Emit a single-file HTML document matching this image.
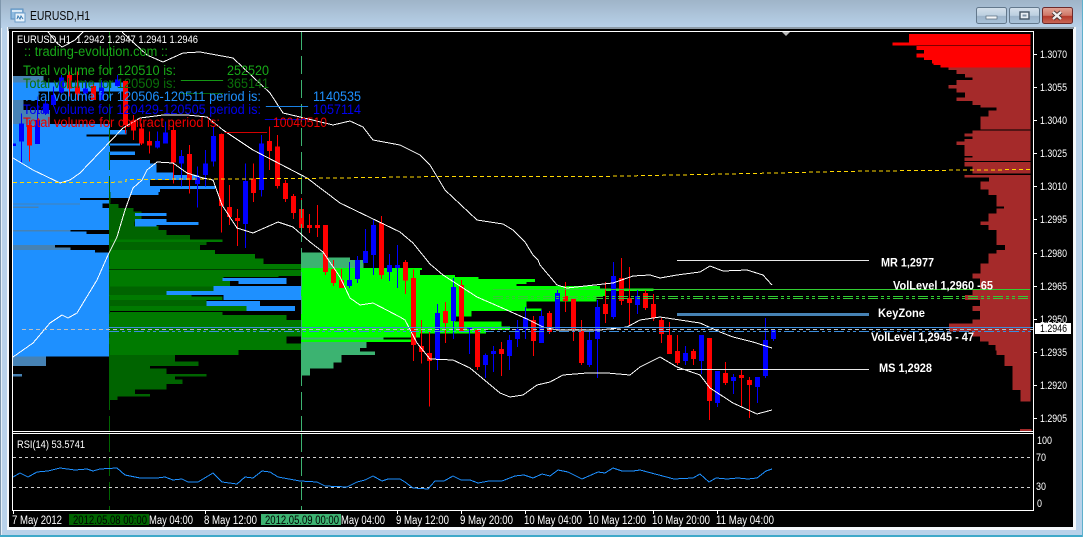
<!DOCTYPE html>
<html><head><meta charset="utf-8"><title>EURUSD,H1</title>
<style>
html,body{margin:0;padding:0;width:1083px;height:537px;overflow:hidden;background:#b9d2ea}
svg{display:block;position:absolute;left:0;top:0}
text{font-family:"Liberation Sans",sans-serif;white-space:pre}
</style></head><body>
<svg width="1083" height="537" viewBox="0 0 1083 537" xmlns="http://www.w3.org/2000/svg">
<defs>
<linearGradient id="tb" x1="0" y1="0" x2="0" y2="1"><stop offset="0" stop-color="#9fb4c8"/><stop offset="1" stop-color="#b9d2ea"/></linearGradient>
<linearGradient id="bt" x1="0" y1="0" x2="0" y2="1"><stop offset="0" stop-color="#d5e1ec"/><stop offset=".5" stop-color="#bccfe0"/><stop offset=".55" stop-color="#9db4ca"/><stop offset="1" stop-color="#a9c3da"/></linearGradient>
<linearGradient id="cl" x1="0" y1="0" x2="0" y2="1"><stop offset="0" stop-color="#e2a597"/><stop offset=".5" stop-color="#cf7667"/><stop offset=".55" stop-color="#b5392b"/><stop offset="1" stop-color="#c96a58"/></linearGradient>
</defs>
<!-- window chrome -->
<rect width="1083" height="537" fill="#b9d2ea"/>
<rect width="1083" height="28" fill="url(#tb)"/>
<rect x="0" y="0" width="1" height="537" fill="#7f97ad"/>
<rect x="1" y="28" width="1" height="507" fill="#e6f0f8"/>
<rect x="0" y="535" width="1083" height="2" fill="#3fa9c9"/>
<rect x="1082" y="0" width="1" height="537" fill="#5fb0cc"/>
<rect x="7" y="27" width="1069" height="503" fill="#f4f7fa"/>
<rect x="8" y="27" width="1066" height="2" fill="#8d9aa6"/>
<rect x="8" y="27" width="1" height="4" fill="#8d9aa6"/>
<rect x="9" y="29" width="1064" height="498" fill="#000"/>
<!-- title icon -->
<g shape-rendering="crispEdges">
<rect x="11" y="9" width="12" height="10" fill="#8fbbe0" stroke="#5a8fbf"/>
<rect x="15" y="13" width="10" height="9" fill="#e9f3fb" stroke="#6b9cc9"/>
<rect x="12" y="10" width="10" height="2" fill="#d9e8f5"/>
</g>
<path d="M17 19l1-3 2 3 1-3 2 3" fill="none" stroke="#3a7ab0"/>
<text x="30" y="20" font-size="12.5" fill="#0a0a0a" textLength="60" lengthAdjust="spacingAndGlyphs">EURUSD,H1</text>
<!-- buttons -->
<rect x="976.5" y="7.5" width="30" height="16" rx="2" fill="url(#bt)" stroke="#63788c"/>
<rect x="986" y="16" width="11" height="3" fill="#f3f6f9" stroke="#56687a" stroke-width=".7"/>
<rect x="1009.5" y="7.5" width="30" height="16" rx="2" fill="url(#bt)" stroke="#63788c"/>
<rect x="1020" y="12" width="9" height="7" fill="#e8eef4" stroke="#445566" stroke-width="1.4"/>
<rect x="1022.5" y="14.5" width="4" height="2" fill="#7f93a6"/>
<rect x="1042.5" y="7.5" width="30" height="16" rx="2" fill="url(#cl)" stroke="#6d2a2a"/>
<path d="M1053 12l8 7M1061 12l-8 7" stroke="#3c2a2a" stroke-width="4"/>
<path d="M1053 12l8 7M1061 12l-8 7" stroke="#f0ecec" stroke-width="2.4"/>

<g shape-rendering="crispEdges">
<!-- blue profile (z1) -->
<g transform="scale(.33333)">
<path fill="#4682b4" d="M38 228H130V248H38z M38 300H70V330H38z M38 330H150V372H38z"/>
<path fill="#1e90ff" d="M38 248H370V275H38z M38 275H115V300H38z
M38 372H330V390H38z M38 390H380V403H38z M38 403H260V410H38z M38 410H330V430H38z M38 430H420V437H38z M38 437H330V455H38z M38 455H405V465H38z M38 465H330V480H38z M38 480H450V490H38z M38 490H470V518H38z M38 518H520V525H38z M38 525H595V540H38z M38 540H450V558H38z M38 558H645V567H38z M38 567H480V576H38z M38 576H475V585H38z M38 585H390V594H38z M38 594H240V600H38z M38 600H327V610H38z M38 610H307V624H38z M38 624H327V690H38z M38 695H260V702H38z M38 702H327V735H38z M38 750H285V758H38z M38 758H327V1070H38z"/>
</g>
<g transform="translate(0,180) scale(.33333)">
<path fill="#4682b4" d="M38 150H212V155H38z M38 195H165V202H38z M38 202H212V210H38z M38 530H138V558H38z M38 582H66V590H38z M38 70H240V73H38z M38 80H115V84H38z"/>
<!-- green -->
<path fill="#006400" d="M327 36H332V70H327z M327 72H355V84H327z M327 84H400V95H327z M327 95H425V125H327z M327 125H403V138H327z M327 138H475V150H327z M327 150H500V165H327z M327 165H570V178H327z M327 186H620V195H327z M327 195H600V210H327z M327 320H645V333H327z M327 333H525V345H327z M327 360H620V378H327z M327 525H525V545H327z M327 545H595V558H327z M327 558H450V565H327z M327 565H500V582H327z M327 582H620V590H327z M327 590H525V598H327z M327 598H548V612H327z M327 612H500V628H327z M327 628H405V642H327z M327 642H450V650H327z M327 650H352V660H327z"/>
<path fill="#007a00" d="M327 178H667V186H327z M327 210H645V222H327z M327 222H765V235H327z M327 235H790V252H327z M327 252H903V268H327z M327 270H903V288H327z M327 288H835V291H327z M327 291H670V303H327z M327 303H690V320H327z M327 345H575V350H327z M327 350H667V360H327z M327 378H765V393H327z M327 396H667V405H327z M327 405H860V420H327z M327 420H903V470H327z M327 470H860V490H327z M327 490H903V510H327z M327 510H715V525H327z"/>
<!-- blue bars over green -->
<path fill="#1e90ff" d="M405 99H500V108H405z M405 117H500V126H405z M405 126H595V135H405z M405 135H470V140H405z M667 294H860V303H667z M715 303H860V312H715z M640 318H903V333H640z M500 333H903V345H500z M670 345H903V360H670z M620 363H780V378H620z M740 378H885V393H740z"/>
</g>
<!-- lime & sea green (z3) -->
<g transform="translate(400,220) scale(.33333)">
<path fill="#3cb371" d="M-297 98H-220V112H-297z M-297 112H-150V120H-297z M-297 120H-110V144H-297z M-297 352H-50V358H-297z M-297 366H-100V384H-297z M-297 384H-120V395H-297z M-297 395H-75V405H-297z M-297 405H-175V428H-297z M-297 428H-200V445H-297z M-297 445H-270V466H-297z"/>
<path fill="#00ff00" d="M-297 144H66V150H-297z M-297 150H60V165H-297z M-297 165H165V171H-297z M-297 171H235V177H-297z M-297 177H405V186H-297z M-297 186H380V192H-297z M-297 192H350V198H-297z M-297 198H600V205H-297z M-297 205H760V213H-297z M-297 213H615V228H-297z M-297 228H590V245H-297z M-297 245H380V265H-297z M-297 265H425V273H-297z M-297 273H215V290H-297z M-297 290H165V305H-297z M-297 305H305V320H-297z M-297 320H330V330H-297z M-297 330H258V340H-297z M-297 340H60V352H-297z M-297 358H35V366H-297z"/>
</g>
<!-- right profile -->
<g transform="translate(800,0) scale(.33333)">
<path fill="#ff0000" d="M327 102H691V128H327z M277 128H691V137H277z M350 138H691V150H350z M372 150H691V160H372z M350 160H691V172H350z M372 172H691V180H372z M396 180H691V190H396z M400 190H691V195H400z M422 195H691V203H422z"/>
<path fill="#a52a2a" d="M445 203H691V210H445z M470 210H691V222H470z M495 222H691V232H495z M518 232H691V240H518z M470 240H691V255H470z M445 255H691V265H445z M470 265H691V278H470z M495 278H691V293H495z M470 293H691V303H470z M518 303H691V315H518z M542 315H691V322H542z M590 322H691V332H590z M565 332H691V350H565z M542 350H691V388H542z M518 392H691V400H518z M493 400H691V410H493z M518 410H691V417H518z M493 417H691V425H493z M470 425H691V435H470z M493 435H691V468H493z M518 468H691V472H518z M493 472H691V483H493z M493 486H691V500H493z M518 500H691V520H518z M493 525H691V533H493z M567 533H691V545H567z M542 545H691V568H542z M565 568H691V585H565z M590 585H691V620H590z M612 620H691V625H612z M590 625H691V640H590z M565 640H691V665H565z M542 665H691V675H542z M565 675H691V690H565z"/>
</g>
<g transform="translate(800,230) scale(.33333)">
<path fill="#a52a2a" d="M590 0H691V45H590z M615 45H691V60H615z M590 60H691V70H590z M565 70H691V100H565z M542 100H691V130H542z M518 130H691V145H518z M540 145H691V178H540z M518 178H691V195H518z M495 195H691V210H495z M540 210H691V228H540z M518 228H691V243H518z M540 243H691V268H540z M518 268H691V280H518z M447 280H691V305H447z M518 305H691V320H518z M540 320H691V335H540z M565 335H691V345H565z M587 345H691V362H587z M590 362H691V375H590z M614 375H691V408H614z M638 408H691V480H638z M662 480H691V515H662z M660 597H695V604H660z"/>
</g>
<!-- candles left -->
<g transform="scale(.33333)">
<path fill="#ff0000" d="M87 360h3V485h-3z M81 375h15V437h-15z M207 215h3V290h-3z M201 225h15V265h-15z M231 215h3V300h-3z M225 260h15V283h-15z M279 250h3V300h-3z M273 258h15V300h-15z M375 240h3V400h-3z M369 243h15V375h-15z M399 345h3V420h-3z M393 362h15V392h-15z M423 370h3V435h-3z M417 385h15V430h-15z M447 395h3V460h-3z M441 423h15V437h-15z M519 375h3V550h-3z M513 390h15V487h-15z M567 435h3V580h-3z M561 462h15V540h-15z M663 400h3V698h-3z M657 402h15V618h-15z M687 555h3V675h-3z M681 621h15V651h-15z M711 627h3V738h-3z M705 654h15V663h-15z M759 490h3V606h-3z M753 535h15V579h-15z M807 380h3V510h-3z M801 423h15V453h-15z M831 405h3V565h-3z M825 440h15V558h-15z M855 540h3V606h-3z M849 549h15V597h-15z M879 582h3V657h-3z M873 588h15V639h-15z M903 594h3V723h-3z M897 627h15V684h-15z M927 642h3V699h-3z M921 675h15V684h-15z M951 615h3V711h-3z M945 675h15V684h-15z M975 675h3V825h-3z M969 675h15V816h-15z M999 780h3V858h-3z M993 807h15V849h-15z M1023 807h3V864h-3z M1017 840h15V864h-15z M1143 648h3V837h-3z M1137 669h15V825h-15z"/>
<path fill="#0000ff" d="M38 430h10v8h-10z M63 340h3V490h-3z M57 370h15V425h-15z M111 290h3V430h-3z M105 360h15V432h-15z M135 290h3V345h-3z M129 310h15V340h-15z M159 260h3V320h-3z M153 285h15V315h-15z M183 225h3V280h-3z M177 232h15V278h-15z M255 240h3V300h-3z M249 265h15V280h-15z M303 240h3V300h-3z M297 262h15V300h-15z M351 225h3V260h-3z M345 238h15V258h-15z M471 395h3V445h-3z M465 423h15V443h-15z M495 365h3V430h-3z M489 397h15V430h-15z M543 450h3V560h-3z M537 468h15V490h-15z M591 500h3V623h-3z M585 533h15V552h-15z M615 450h3V560h-3z M609 490h15V525h-15z M639 380h3V500h-3z M633 408h15V485h-15z M735 490h3V744h-3z M729 543h15V672h-15z M783 405h3V590h-3z M777 430h15V570h-15z M1047 786h3V864h-3z M1041 840h15V858h-15z M1071 768h3V849h-3z M1065 780h15V837h-15z M1095 687h3V789h-3z M1089 753h15V789h-15z M1119 660h3V825h-3z M1113 675h15V765h-15z M1167 762h3V843h-3z M1161 795h15V816h-15z M1191 735h3V864h-3z M1185 795h15V804h-15z"/>
</g>
<!-- candles right -->
<g transform="translate(400,220) scale(.33333)">
<path fill="#ff0000" d="M15 120h3V222h-3z M9 126h15V182h-15z M39 148h3V423h-3z M33 174h15V375h-15z M63 300h3V430h-3z M57 378h15V396h-15z M87 333h3V560h-3z M81 399h15V423h-15z M135 246h3V369h-3z M129 273h15V309h-15z M183 180h3V336h-3z M177 195h15V333h-15z M231 327h3V450h-3z M225 330h15V441h-15z M303 366h3V468h-3z M297 387h15V402h-15z M399 288h3V408h-3z M393 300h15V363h-15z M447 273h3V342h-3z M441 279h15V336h-15z M495 186h3V276h-3z M489 228h15V243h-15z M519 234h3V363h-3z M513 237h15V327h-15z M543 300h3V435h-3z M537 333h15V429h-15z M615 186h3V309h-3z M609 252h15V282h-15z M663 114h3V255h-3z M657 174h15V243h-15z M687 141h3V318h-3z M681 234h15V249h-15z M735 210h3V270h-3z M729 219h15V264h-15z M759 222h3V303h-3z M753 252h15V294h-15z M783 294h3V369h-3z M777 300h15V342h-15z M807 306h3V402h-3z M801 345h15V402h-15z M831 345h3V435h-3z M825 393h15V429h-15z M879 387h3V435h-3z M873 393h15V417h-15z M927 354h3V600h-3z M921 354h15V543h-15z M975 426h3V495h-3z M969 459h15V489h-15z M1023 450h3V558h-3z M1017 465h15V474h-15z M1047 471h3V594h-3z M1041 480h15V495h-15z"/>
<path fill="#0000ff" d="M111 252h3V450h-3z M105 279h15V417h-15z M159 174h3V357h-3z M153 201h15V303h-15z M207 324h3V402h-3z M201 324h15V327h-15z M255 400h3V474h-3z M249 405h15V435h-15z M279 378h3V456h-3z M273 393h15V402h-15z M327 345h3V450h-3z M321 360h15V408h-15z M351 300h3V381h-3z M345 327h15V357h-15z M375 261h3V357h-3z M369 294h15V327h-15z M423 270h3V369h-3z M417 288h15V369h-15z M471 210h3V330h-3z M465 219h15V330h-15z M567 333h3V441h-3z M561 360h15V435h-15z M591 240h3V474h-3z M585 261h15V357h-15z M639 126h3V297h-3z M633 168h15V291h-15z M711 210h3V282h-3z M705 228h15V255h-15z M855 378h3V435h-3z M849 399h15V423h-15z M903 345h3V462h-3z M897 345h15V423h-15z M951 453h3V561h-3z M945 453h15V549h-15z M999 462h3V522h-3z M993 471h15V483h-15z M1071 471h3V549h-3z M1065 471h15V501h-15z M1095 294h3V474h-3z M1089 360h15V468h-15z M1119 330h3V363h-3z M1113 330h15V357h-15z"/>
</g>
<!-- vertical period separators -->
<path d="M109.5 32V431M109.5 434V510" stroke="#006400" stroke-dasharray="18 6" fill="none"/>
<path d="M301.5 32V431M301.5 434V510" stroke="#3cb371" stroke-dasharray="18 6" fill="none"/>
</g>
<!-- Bollinger bands -->
<g fill="none" stroke="#fff" stroke-width="1" shape-rendering="crispEdges">
<polyline points="48,32 57,43 62,47 66,45 75,40 83,32"/>
<polyline points="122,32 147,55 163,62 183,53 200,52 233,58 253,77 270,93 283,113 300,117 333,125 350,121 363,127 373,140 400,145 420,155 430,165 445,190 477,220 503,224 513,230 525,242 533,255 538,260 540,265 557,285 567,288 613,283 633,276 650,275 660,278 677,275 700,272 710,266 723,271 747,270 763,275 772,285"/>
<polyline points="13,158 33,170 60,183 70,180 80,173 100,152 123,128 140,118 163,115 187,115 207,117 223,130 253,150 307,178 340,203 400,232 413,243 430,264 443,275 477,297 500,307 527,319 543,327 557,330 600,330 627,327 640,320 660,317 700,323 720,332 733,337 753,342 772,348"/>
<polyline points="13,357 33,343 50,323 62,315 68,318 77,313 97,280 108,255 117,237 125,210 133,188 142,180 147,170 157,162 173,163 187,173 203,178 213,180 222,205 237,228 253,233 278,222 293,227 310,242 323,252 340,277 350,298 360,305 373,303 400,317 405,320 417,343 430,359 453,360 470,368 500,393 510,397 523,395 537,385 550,382 563,375 587,373 607,373 630,375 640,367 660,357 677,367 700,375 710,388 733,403 757,414 772,410"/>
</g>
<!-- horizontal levels -->
<g fill="none" shape-rendering="crispEdges">
<polyline points="13,182.5 110,182.5 126,181.5 126,179.5 300,178.5 440,176.5 600,176.5 800,172.5 837,171.5 920,170.5 1030,169.5" stroke="#ffd700" stroke-dasharray="4 3"/>
<path d="M677 260.5H869M677 369.5H869" stroke="#e8e8e8"/>
<path d="M677 314.5H869" stroke="#4682b4" stroke-width="3"/>
<path d="M493 289.5H1030" stroke="#32cd32"/>
<path d="M493 296.5H1030M493 298.5H1030" stroke="#32cd32" stroke-dasharray="10 3 3 3 3 3"/>
<path d="M22 329.5H1033" stroke="#c0c0c0" stroke-dasharray="4 3"/>
<path d="M109 327.5H1033" stroke="#3b8ddd"/>
<path d="M109 331.5H1033" stroke="#3b8ddd" stroke-dasharray="10 3 3 3 3 3"/>
</g>
<!-- frame -->
<g fill="#fff" shape-rendering="crispEdges">
<rect x="12" y="31" width="1022" height="1"/>
<rect x="12" y="31" width="1" height="480"/>
<rect x="1033" y="31" width="1" height="480"/>
<rect x="12" y="431" width="1022" height="1"/>
<rect x="12" y="433" width="1022" height="1"/>
<rect x="12" y="510" width="1022" height="1"/>
<path d="M1034 54h3v1h-3zM1034 87h3v1h-3zM1034 120h3v1h-3zM1034 153h3v1h-3zM1034 186h3v1h-3zM1034 219h3v1h-3zM1034 253h3v1h-3zM1034 286h3v1h-3zM1034 319h3v1h-3zM1034 352h3v1h-3zM1034 385h3v1h-3zM1034 418h3v1h-3z"/>
<path d="M13 511h1v3h-1zM205 511h1v3h-1zM397 511h1v3h-1zM461 511h1v3h-1zM525 511h1v3h-1zM589 511h1v3h-1zM653 511h1v3h-1zM717 511h1v3h-1z"/>
</g>
<path d="M782 32h8l-4 4z" fill="#b8b8b8"/>
<!-- RSI -->
<g fill="none" shape-rendering="crispEdges">
<path d="M13 457.5H1033M13 487.5H1033" stroke="#d0d0d0" stroke-dasharray="3 3"/>
<polyline stroke="#1e90ff" points="13,477 20,473 28,477 37,472 48,471 60,468 75,470 87,469 93,471 100,469 117,468 125,475 140,478 157,478 165,477 173,480 182,479 188,482 198,482 213,473 222,482 237,484 245,477 253,478 262,471 270,472 278,477 300,481 317,482 325,486 347,487 357,482 365,480 373,476 382,481 388,479 400,479 405,482 413,488 428,489 435,481 444,481 453,476 461,480 470,480 478,483 489,481 502,481 515,476 524,475 533,478 542,474 550,476 558,470 568,472 582,479 598,472 605,473 613,468 622,471 633,471 640,470 674,479 693,478 700,474 709,482 716,478 727,479 738,478 748,479 757,478 766,471 772,469"/>
</g>
<!-- current price box -->
<rect x="1035" y="323" width="36" height="11" fill="#fff" shape-rendering="crispEdges"/>
<g fill="#fff" font-size="11">
<text x="1040" y="58" textLength="27" lengthAdjust="spacingAndGlyphs">1.3070</text>
<text x="1040" y="91" textLength="27" lengthAdjust="spacingAndGlyphs">1.3055</text>
<text x="1040" y="124" textLength="27" lengthAdjust="spacingAndGlyphs">1.3040</text>
<text x="1040" y="157" textLength="27" lengthAdjust="spacingAndGlyphs">1.3025</text>
<text x="1040" y="190" textLength="27" lengthAdjust="spacingAndGlyphs">1.3010</text>
<text x="1040" y="223" textLength="27" lengthAdjust="spacingAndGlyphs">1.2995</text>
<text x="1040" y="257" textLength="27" lengthAdjust="spacingAndGlyphs">1.2980</text>
<text x="1040" y="290" textLength="27" lengthAdjust="spacingAndGlyphs">1.2965</text>
<text x="1040" y="323" textLength="27" lengthAdjust="spacingAndGlyphs">1.2950</text>
<text x="1040" y="356" textLength="27" lengthAdjust="spacingAndGlyphs">1.2935</text>
<text x="1040" y="389" textLength="27" lengthAdjust="spacingAndGlyphs">1.2920</text>
<text x="1040" y="422" textLength="27" lengthAdjust="spacingAndGlyphs">1.2905</text>
<text x="1040" y="332" fill="#000" textLength="27" lengthAdjust="spacingAndGlyphs">1.2946</text>
<text x="1037" y="444" textLength="15" lengthAdjust="spacingAndGlyphs">100</text>
<text x="1036" y="461" textLength="10" lengthAdjust="spacingAndGlyphs">70</text>
<text x="1036" y="490" textLength="10" lengthAdjust="spacingAndGlyphs">30</text>
<text x="1037" y="507" textLength="5" lengthAdjust="spacingAndGlyphs">0</text>
<text x="17" y="43" textLength="181" lengthAdjust="spacingAndGlyphs">EURUSD,H1  1.2942 1.2947 1.2941 1.2946</text>
<text x="17" y="448" textLength="68" lengthAdjust="spacingAndGlyphs">RSI(14) 53.5741</text>
</g>
<!-- time axis -->
<rect x="69" y="514" width="80" height="11" fill="#006400" shape-rendering="crispEdges"/>
<rect x="261" y="514" width="80" height="11" fill="#3cb371" shape-rendering="crispEdges"/>
<g fill="#fff" font-size="11.5">
<text x="12" y="524" textLength="50" lengthAdjust="spacingAndGlyphs">7 May 2012</text>
<text x="73" y="524" fill="#000" textLength="74" lengthAdjust="spacingAndGlyphs">2012.05.08 00:00</text>
<text x="149" y="524" textLength="44" lengthAdjust="spacingAndGlyphs">May 04:00</text>
<text x="204" y="524" textLength="53" lengthAdjust="spacingAndGlyphs">8 May 12:00</text>
<text x="265" y="524" fill="#000" textLength="74" lengthAdjust="spacingAndGlyphs">2012.05.09 00:00</text>
<text x="341" y="524" textLength="44" lengthAdjust="spacingAndGlyphs">May 04:00</text>
<text x="396" y="524" textLength="53" lengthAdjust="spacingAndGlyphs">9 May 12:00</text>
<text x="460" y="524" textLength="53" lengthAdjust="spacingAndGlyphs">9 May 20:00</text>
<text x="524" y="524" textLength="58" lengthAdjust="spacingAndGlyphs">10 May 04:00</text>
<text x="588" y="524" textLength="58" lengthAdjust="spacingAndGlyphs">10 May 12:00</text>
<text x="652" y="524" textLength="58" lengthAdjust="spacingAndGlyphs">10 May 20:00</text>
<text x="716" y="524" textLength="58" lengthAdjust="spacingAndGlyphs">11 May 04:00</text>
</g>
<!-- overlay text -->
<g font-size="13.5">
<text x="24" y="56" fill="#18a818" textLength="144" lengthAdjust="spacingAndGlyphs">:: trading-evolution.com ::</text>
<g fill="#17a817">
<text x="23" y="75" textLength="153" lengthAdjust="spacingAndGlyphs">Total volume for 120510 is:</text>
<text x="181" y="78" textLength="42" lengthAdjust="spacingAndGlyphs">_______</text>
<text x="227" y="75" textLength="42" lengthAdjust="spacingAndGlyphs">252520</text>
</g>
<g fill="#0a700a">
<text x="23" y="88" textLength="153" lengthAdjust="spacingAndGlyphs">Total volume for 120509 is:</text>
<text x="181" y="91" textLength="42" lengthAdjust="spacingAndGlyphs">_______</text>
<text x="227" y="88" textLength="42" lengthAdjust="spacingAndGlyphs">365141</text>
</g>
<g fill="#1e90ff">
<text x="23" y="101" textLength="238" lengthAdjust="spacingAndGlyphs">Total volume for 120506-120511 period is:</text>
<text x="266" y="104" textLength="42" lengthAdjust="spacingAndGlyphs">_______</text>
<text x="313" y="101" textLength="48" lengthAdjust="spacingAndGlyphs">1140535</text>
</g>
<g fill="#0000f0">
<text x="23" y="114" textLength="238" lengthAdjust="spacingAndGlyphs">Total volume for 120429-120505 period is:</text>
<text x="265" y="117" textLength="42" lengthAdjust="spacingAndGlyphs">_______</text>
<text x="313" y="114" textLength="48" lengthAdjust="spacingAndGlyphs">1057114</text>
</g>
<g fill="#ee0000">
<text x="23" y="127" textLength="197" lengthAdjust="spacingAndGlyphs">Total volume for contract period is:</text>
<text x="225" y="130" textLength="42" lengthAdjust="spacingAndGlyphs">_______</text>
<text x="273" y="127" textLength="54" lengthAdjust="spacingAndGlyphs">10040510</text>
</g>
</g>
<!-- level labels -->
<g fill="#fff" font-size="12" font-weight="bold">
<text x="881" y="266.5" textLength="53" lengthAdjust="spacingAndGlyphs">MR 1,2977</text>
<text x="893" y="289.5" textLength="100" lengthAdjust="spacingAndGlyphs">VolLevel 1,2960 -65</text>
<text x="878" y="317" textLength="47" lengthAdjust="spacingAndGlyphs">KeyZone</text>
<text x="871" y="341" textLength="103" lengthAdjust="spacingAndGlyphs">VolLevel 1,2945 - 47</text>
<text x="879" y="372" textLength="53" lengthAdjust="spacingAndGlyphs">MS 1,2928</text>
</g>
</svg>
</body></html>
